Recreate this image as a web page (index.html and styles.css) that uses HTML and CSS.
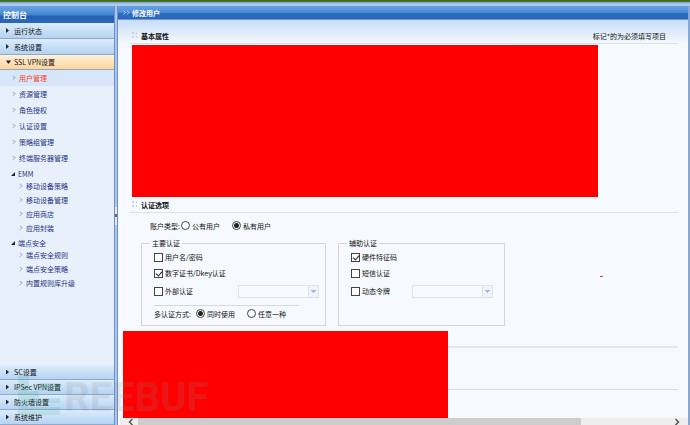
FILE: index.html
```html
<!doctype html>
<html lang="zh-CN">
  <head>
    <meta charset="utf-8" />
    <meta name="viewport" content="width=device-width" />
    <title>修改用户</title>
    <link rel="stylesheet" href="styles.css">
  </head>

  <body>
    <nav class="sidebar">
      <h1 class="side-title">控制台</h1>
      <button class="group" type="button">运行状态</button>
      <button class="group" type="button">系统设置</button>
      <button class="group open" type="button">SSL VPN设置</button>
      <ul class="menu">
        <li class="current"><a href="#">用户管理</a></li>
        <li><a href="#">资源管理</a></li>
        <li><a href="#">角色授权</a></li>
        <li><a href="#">认证设置</a></li>
        <li><a href="#">策略组管理</a></li>
        <li><a href="#">终端服务器管理</a></li>
      </ul>
      <p class="branch">EMM</p>
      <ul class="menu sub">
        <li><a href="#">移动设备策略</a></li>
        <li><a href="#">移动设备管理</a></li>
        <li><a href="#">应用商店</a></li>
        <li><a href="#">应用封装</a></li>
      </ul>
      <p class="branch">端点安全</p>
      <ul class="menu sub">
        <li><a href="#">端点安全规则</a></li>
        <li><a href="#">端点安全策略</a></li>
        <li><a href="#">内置规则库升级</a></li>
      </ul>
      <div class="bottom-groups">
        <button class="group" type="button">SC设置</button>
        <button class="group" type="button">IPSec VPN设置</button>
        <button class="group" type="button">防火墙设置</button>
        <button class="group" type="button">系统维护</button>
      </div>
    </nav>

    <div class="splitter">
      <button type="button" aria-label="收起"></button>
    </div>

    <main class="panel">
      <h2 class="panel-title">
        <svg width="7" height="5" viewBox="0 0 7 5">
          <path d="M.5 .5l2 2-2 2M4 .5l2 2-2 2" fill="none" stroke="#a9cbf5" />
        </svg>
        修改用户
      </h2>

      <form class="content">
        <section>
          <header class="section-head">
            <h3>基本属性</h3>
            <span class="hint">标记*的为必须填写项目</span>
          </header>
          <div class="mask"></div>
        </section>

        <section>
          <header class="section-head">
            <h3>认证选项</h3>
          </header>
          <div class="account">
            <span>账户类型:</span>
            <label><input type="radio" name="account" />公有用户</label>
            <label><input type="radio" name="account" checked />私有用户</label>
          </div>

          <div class="auth">
            <fieldset class="primary">
              <legend>主要认证</legend>
              <div class="row">
                <label><input type="checkbox" />用户名/密码</label>
              </div>
              <div class="row">
                <label><input type="checkbox" checked />数字证书/Dkey认证</label>
              </div>
              <div class="row tall">
                <label><input type="checkbox" />外部认证</label>
                <select aria-label="外部认证" disabled></select>
              </div>
              <div class="mode">
                <span>多认证方式:</span>
                <label><input type="radio" name="mode" checked />同时使用</label>
                <label><input type="radio" name="mode" />任意一种</label>
              </div>
            </fieldset>

            <fieldset class="extra">
              <legend>辅助认证</legend>
              <div class="row">
                <label><input type="checkbox" checked />硬件特征码</label>
              </div>
              <div class="row">
                <label><input type="checkbox" />短信认证</label>
              </div>
              <div class="row tall">
                <label><input type="checkbox" />动态令牌</label>
                <select aria-label="动态令牌" disabled></select>
              </div>
            </fieldset>
            <span class="dash"></span>
          </div>
        </section>

        <section class="blank"></section>
        <section class="blank last"></section>
        <div class="mask cover"></div>
      </form>

      <div class="scrollbar">
        <svg width="18" height="8" viewBox="0 0 18 8">
          <path d="M12.500 1l-3 3 3 3" fill="none" stroke="#555" stroke-width="1.500" />
        </svg>
        <div class="thumb"></div>
        <svg width="18" height="8" viewBox="0 0 18 8">
          <path d="M5.500 1l3 3-3 3" fill="none" stroke="#555" stroke-width="1.500" />
        </svg>
      </div>
    </main>

    <div class="watermark">
      <svg width="42" height="40" viewBox="0 0 42 40">
        <path d="M0 0h11v16h10v-8h21v8H21v7h21v5H11v4h31v8H0z" fill="#3fae84" />
      </svg>
      <span>REEBUF</span>
    </div>
  </body>
</html>
```

FILE: styles.css
```css
* {
  box-sizing: border-box;
}
body {
  display: flex;
  height: 100vh;
  margin: 0;
  padding-top: 6px;
  overflow: hidden;
  position: relative;
  background: linear-gradient(#3c6a1e 1px, #5b8b4a 2px, #6f95c4 2px, #b3cdef 4px, #a9c8ee 6px, #a9c8ee);
  color: #111;
  font: 7px/10px "Noto Sans CJK SC", "Liberation Sans", sans-serif;
}
h1, h2, h3, p, ul {
  margin: 0;
  padding: 0;
  font-size: inherit;
}
ul {
  list-style: none;
}
button {
  font: inherit;
  color: inherit;
}

/* sidebar */
.sidebar {
  display: flex;
  flex-direction: column;
  flex: none;
  width: 114px;
  background: #e8f0fc;
}
.side-title {
  height: 17px;
  padding-left: 3px;
  background: linear-gradient(#6ba4e2, #4586d2 50%, #2460b5 60%, #2a66ba);
  color: #fff;
  font-size: 8px;
  line-height: 17px;
}
.group {
  display: flex;
  align-items: center;
  flex: none;
  width: 100%;
  height: 16px;
  padding: 0 0 0 6px;
  border: 0;
  border-bottom: 1px solid #8fa9cb;
  background: linear-gradient(#dcecfb, #b5d4f3);
}
.group::before {
  content: "";
  width: 8px;
  height: 5px;
  background: #223;
  clip-path: polygon(0 0, 3px 50%, 0 100%);
}
.group.open {
  height: 15px;
  background: linear-gradient(#fff1da, #ffd49a);
}
.group.open::before {
  clip-path: polygon(0 1px, 5px 1px, 3px 4px, 2px 4px);
}
.menu li {
  display: flex;
  align-items: center;
  height: 16px;
  padding-left: 11px;
}
.menu li::before {
  content: "";
  width: 3px;
  height: 3px;
  margin-right: 4px;
  border: solid #9db4dc;
  border-width: 1px 1px 0 0;
  scale: 0.8 1;
  rotate: 45deg;
}
.menu a {
  color: #1f3480;
  text-decoration: none;
}
.menu .current {
  background: #d8e6fa;
}
.menu .current a {
  color: #f4411f;
}
.menu.sub li {
  height: 14px;
  padding-left: 18px;
}
.branch {
  display: flex;
  align-items: center;
  height: 13px;
  padding: 3px 0 0 11px;
  color: #1f3480;
}
.branch::before {
  content: "";
  width: 4px;
  height: 4px;
  margin-right: 3px;
  background: #223;
  clip-path: polygon(100% 0, 100% 100%, 0 100%);
}
.bottom-groups {
  margin-top: auto;
}
.bottom-groups .group {
  height: 15px;
}

.splitter {
  display: flex;
  align-items: center;
  flex: none;
  width: 4px;
  border: solid #6f8fc4;
  border-width: 0 1px;
  background: #a9c8ee;
}
.splitter button {
  display: flex;
  align-items: center;
  width: 2px;
  height: 18px;
  padding: 0;
  border: 0;
  background: #e4e8ee;
}
.splitter button::before {
  content: "";
  width: 2px;
  height: 3px;
  background: #667;
}

/* main panel */
.panel {
  display: flex;
  flex-direction: column;
  flex: 1;
  min-width: 0;
  border-right: 2px solid #86a8d8;
  background: linear-gradient(#c8ddf7 14px, #f6fafe 38px);
}
.panel-title {
  display: flex;
  align-items: center;
  gap: 2px;
  flex: none;
  height: 14px;
  padding-left: 5px;
  border-bottom: 1px solid #6d9ad8;
  background: linear-gradient(#6aa2e2, #4a8bd7 50%, #2e6cc2 55%, #2c66b8);
  color: #fff;
}
.content {
  flex: 1;
  min-height: 0;
  padding: 8px 10px 0 11px;
  position: relative;
}
.section-head {
  display: flex;
  align-items: center;
  height: 16px;
  border-bottom: 1px solid #dde1e8;
}
.section-head::before {
  content: "";
  width: 7px;
  height: 7px;
  margin: 0 4px 0 1px;
  background: conic-gradient(#c3d2f0 25%, transparent 0) 0 0 / 4px 4px;
}
.hint {
  margin: 0 12px 0 auto;
}
.mask {
  width: 466px;
  max-width: 100%;
  height: 152px;
  margin: 1px 0 0 3px;
  background: #f00;
}
.mask.cover {
  width: 325px;
  height: 87px;
  margin: 0;
  position: absolute;
  left: 5px;
  bottom: 0;
}
label {
  display: flex;
  align-items: center;
  gap: 2px;
}
input {
  appearance: none;
  width: 9px;
  height: 9px;
  margin: 0;
  border: 1px solid #444;
  background: #fff;
}
input[type="radio"] {
  border-radius: 50%;
}
input[type="radio"]:checked {
  background: radial-gradient(#222 2px, #fff 3px);
}
input[type="checkbox"]:checked::before {
  content: "";
  display: block;
  width: 3px;
  height: 5px;
  margin-left: 2px;
  border: solid #222;
  border-width: 0 1px 1px 0;
  rotate: 40deg;
}
.account {
  display: flex;
  align-items: center;
  height: 25px;
  padding-left: 21px;
}
.account label {
  margin-left: 1px;
}
.account label + label {
  margin-left: 12px;
}
.auth {
  display: flex;
  gap: 12px;
  padding-left: 12px;
}
fieldset {
  min-width: 0;
  height: 88px;
  margin: 0;
  padding: 1px 6px 0 12px;
  border: 1px solid #d0d5e6;
}
.primary {
  width: 185px;
}
.extra {
  width: 167px;
}
legend {
  margin-left: -4px;
  padding: 0 2px;
}
.row {
  display: flex;
  align-items: center;
  justify-content: space-between;
  height: 16px;
}
.row.tall {
  height: 20px;
}
select {
  appearance: none;
  width: 81px;
  height: 13px;
  border: 1px solid #d3d9e4;
  border-radius: 0;
  background:
    conic-gradient(from 315deg at 50% 100%, #7f9dcb 25%, transparent 0) 72px 4px / 5px 3px no-repeat,
    linear-gradient(90deg, #d3d9e4 1px, #edf2fa 1px) right / 10px no-repeat,
    #fafcff;
}
.extra select {
  margin-right: 5px;
}
.mode {
  display: flex;
  align-items: center;
  width: 145px;
  height: 16px;
  margin-top: 4px;
  border-top: 1px solid #d5dae2;
}
.mode label {
  margin-left: 5px;
}
.mode label + label {
  margin-left: 12px;
}
.dash {
  width: 3px;
  height: 1px;
  margin: 38px 0 0 83px;
  background: #e33;
}
.blank {
  height: 22px;
  border-bottom: 2px solid #e3e7ec;
}
.blank.last {
  height: 42px;
  border-bottom: 1px solid #d9dee5;
}

.scrollbar {
  display: flex;
  flex: none;
  height: 7px;
  margin-left: 2px;
  background: #eee;
}
.scrollbar svg:last-child {
  margin-left: auto;
}
.thumb {
  width: 78%;
  background: #cdcdcd;
}

.watermark {
  display: flex;
  align-items: center;
  gap: 4px;
  position: absolute;
  left: 18px;
  bottom: 7px;
  color: #888;
  font: bold 40px/40px Roboto, sans-serif;
  opacity: 0.16;
  pointer-events: none;
}
.watermark span {
  padding-top: 6px;
}
```
